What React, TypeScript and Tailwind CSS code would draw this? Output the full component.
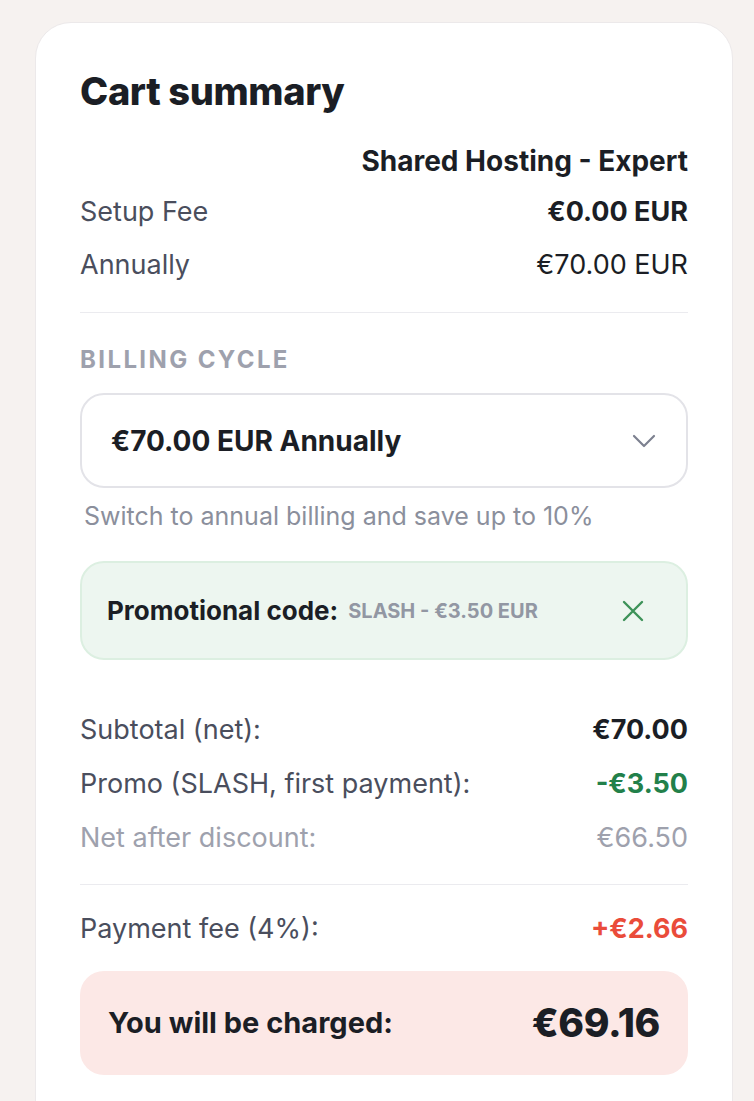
import React from "react";

const font = { fontFamily: "Inter, 'Noto Sans', sans-serif" };

const Row = ({ label, value, labelCls, valueCls }: { label: string; value: string; labelCls: string; valueCls: string }) => (
  <div className="flex items-center justify-between">
    <span className={labelCls}>{label}</span>
    <span className={valueCls}>{value}</span>
  </div>
);

export default function App() {
  return (
    <div className="min-h-[1101px] bg-[#f6f2f0] pl-[35px] pr-[21px] pt-[22px] overflow-hidden" style={font}>
      <div className="bg-white rounded-t-[36px] border border-[#ece9ea] px-[44px] pt-[46px] pb-10 h-[1100px]">
        <h1 className="text-[38px] font-extrabold text-[#1b1e25] tracking-[-0.01em] leading-[44px]">Cart summary</h1>

        <div className="mt-[33px] text-right text-[28px] font-bold text-[#1b1e25] leading-[30px]">
          Shared Hosting - Expert
        </div>
        <div className="mt-[21px] flex flex-col gap-[23px] text-[27px] leading-[30px]">
          <Row label="Setup Fee" value="€0.00 EUR" labelCls="text-[#4a4e5d]" valueCls="font-bold text-[#1b1e25]" />
          <Row label="Annually" value="€70.00 EUR" labelCls="text-[#4a4e5d]" valueCls="text-[#1b1e25]" />
        </div>

        <div className="mt-[32px] border-t border-[#ebebef]" />

        <div className="mt-[34px] text-[24px] font-bold tracking-[0.1em] text-[#9ea1ad] leading-[26px]">BILLING CYCLE</div>

        <div className="mt-[20px] h-[95px] rounded-[24px] border-2 border-[#e3e3e8] flex items-center justify-between pl-[29px] pr-[30px]">
          <span className="text-[28px] font-bold text-[#1b1e25]">€70.00 EUR Annually</span>
          <svg width="24" height="14" viewBox="0 0 24 14" fill="none" stroke="#7d8190" strokeWidth="2.2" strokeLinecap="round" strokeLinejoin="round">
            <path d="M2 2l10 10 10-10" />
          </svg>
        </div>

        <p className="mt-[15px] pl-1 text-[25px] text-[#8b8f9c] leading-[26px]">Switch to annual billing and save up to 10%</p>

        <div className="mt-[32px] h-[99px] rounded-[24px] border-2 border-[#dcefe1] bg-[#edf6f0] flex items-center pl-[25px] pr-[42px]">
          <span className="text-[26px] font-bold text-[#1b1e25]">Promotional code:</span>
          <span className="ml-[10px] text-[20px] font-bold text-[#9297a3]">SLASH - €3.50 EUR</span>
          <svg className="ml-auto" width="22" height="22" viewBox="0 0 22 22" fill="none" stroke="#3d9259" strokeWidth="2.4" strokeLinecap="round">
            <path d="M2 2l18 18M20 2L2 20" />
          </svg>
        </div>

        <div className="mt-[55px] flex flex-col gap-[24px] text-[27px] leading-[30px]">
          <Row label="Subtotal (net):" value="€70.00" labelCls="text-[#4a4e5d]" valueCls="font-bold text-[#1b1e25]" />
          <Row label="Promo (SLASH, first payment):" value="-€3.50" labelCls="text-[#4a4e5d]" valueCls="font-bold text-[#22804a]" />
          <Row label="Net after discount:" value="€66.50" labelCls="text-[#9ea1ad]" valueCls="text-[#9ea1ad]" />
        </div>

        <div className="mt-[31px] border-t border-[#ebebef]" />

        <div className="mt-[29px] text-[27px] leading-[30px]">
          <Row label="Payment fee (4%):" value="+€2.66" labelCls="text-[#4a4e5d]" valueCls="font-bold text-[#ea4c3a]" />
        </div>

        <div className="mt-[27px] h-[104px] rounded-[24px] bg-[#fce8e6] flex items-center justify-between pl-[28px] pr-[28px]">
          <span className="text-[29px] font-bold text-[#1b1e25]">You will be charged:</span>
          <span className="text-[39px] font-extrabold text-[#1b1e25] tracking-[-0.01em]">€69.16</span>
        </div>
      </div>
    </div>
  );
}
